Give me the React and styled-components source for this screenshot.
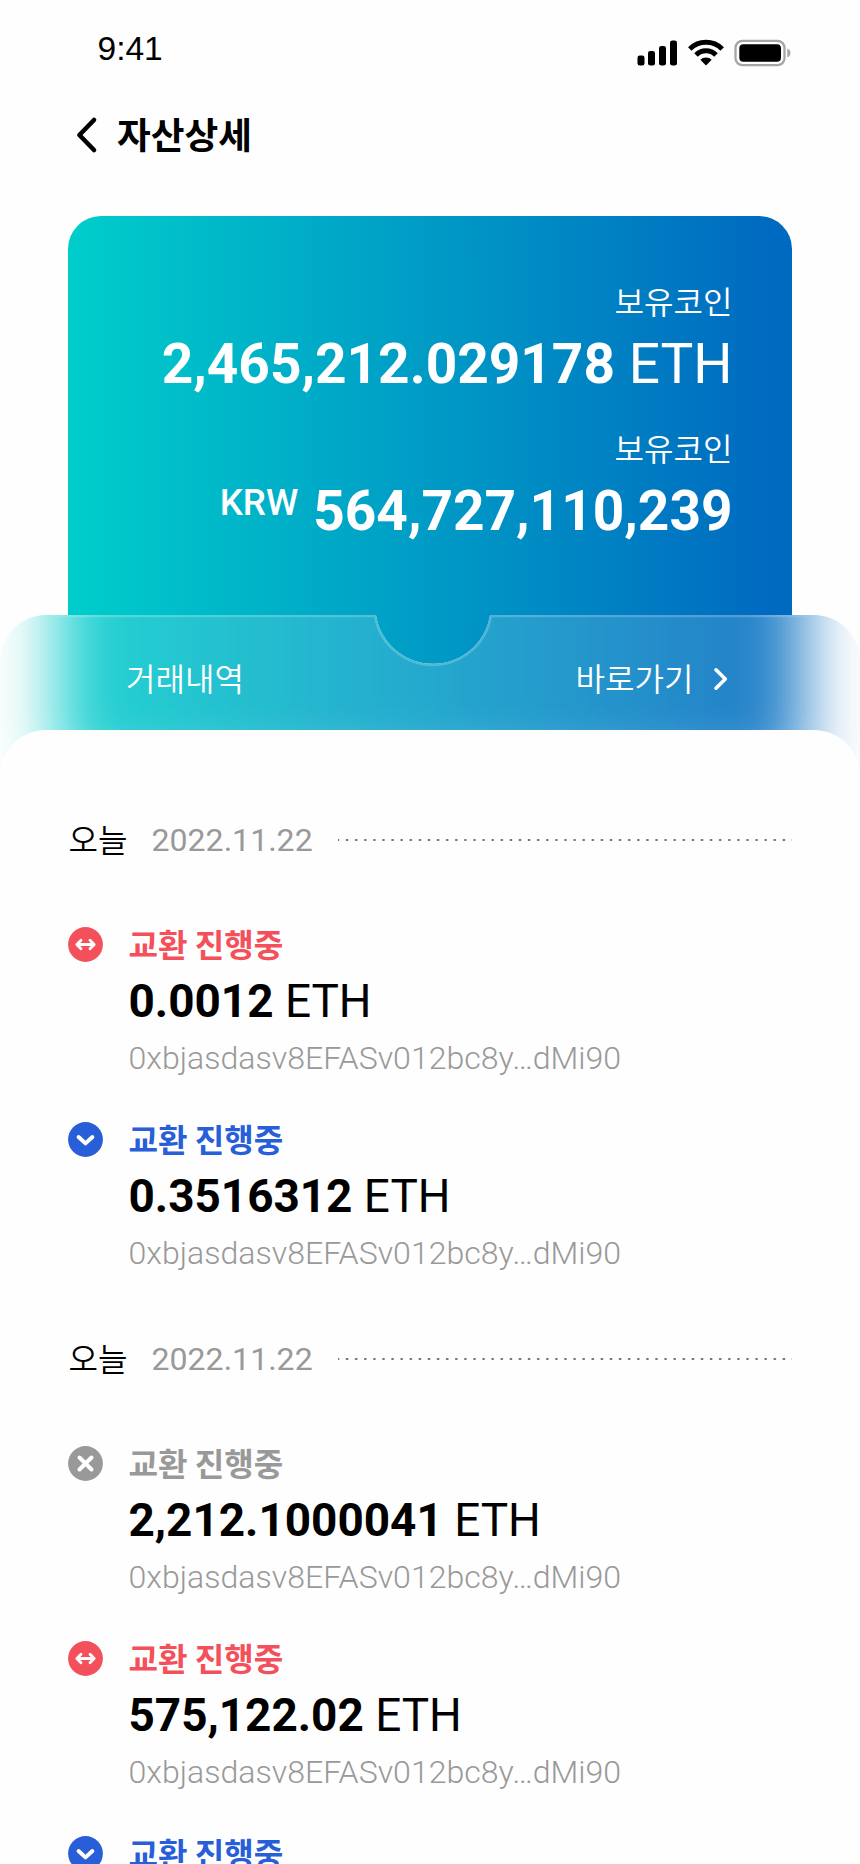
import React from "react";
import styled, { createGlobalStyle } from "styled-components";

const KR = '"Noto Sans CJK KR", sans-serif';
const LATIN = 'Roboto, "Noto Sans CJK KR", sans-serif';

const GlobalStyle = createGlobalStyle`
  * { box-sizing: border-box; }
  html, body { margin: 0; padding: 0; background: #fefefe; }
  body { width: 860px; height: 1864px; overflow: hidden; }
  #root { height: 100%; }
`;

const Screen = styled.main`
  display: flex;
  flex-direction: column;
  width: 860px;
  height: 1864px;
  overflow: hidden;
  background: #fefefe;
  color: #000;
`;

const StatusBar = styled.div`
  display: flex;
  flex: none;
  justify-content: space-between;
  height: 104px;
  padding: 29px 69px 0 97.5px;
`;

const Clock = styled.time`
  font: 400 33.5px/40px "Liberation Sans", Arial, sans-serif;
`;

const StatusIcons = styled.svg`
  width: 156px;
  height: 32px;
  margin-top: 7px;
`;

const NavBar = styled.header`
  display: flex;
  flex: none;
  align-items: center;
  height: 58px;
  padding-left: 74px;
  margin-bottom: 53.5px;
`;

const BackButton = styled.button`
  display: flex;
  width: 43px;
  padding: 3px 0 0;
  border: 0;
  background: none;
  color: inherit;
`;

const Title = styled.h1`
  margin: -1px 0 0;
  font: 700 36.7px/58px ${KR};
`;

const cardGradient = "linear-gradient(90deg, #00cdcb 1%, #0069c0 98%)";

const BalanceCard = styled.section`
  display: flex;
  flex-direction: column;
  align-items: flex-end;
  flex: none;
  height: 500px;
  margin: 0 68px;
  padding: 61px 59.5px 0 0;
  border-radius: 33px 33px 0 0;
  background: ${cardGradient};
  color: #fff;
`;

const Balance = styled.div`
  display: flex;
  flex-direction: column;
  align-items: flex-end;
  height: 147px;
`;

const BalanceLabel = styled.span`
  margin-bottom: 9.5px;
  font: 350 32.1px/46px ${KR};
`;

const BalanceValue = styled.strong`
  font: 700 55px/64px ${LATIN};
  white-space: pre;
`;

const Unit = styled.span`
  font-weight: 400;
`;

const Currency = styled.span`
  margin-right: 15px;
  font-size: 36.7px;
  font-weight: 500;
  line-height: 1;
  vertical-align: 15px;
`;

const ActionStrip = styled.nav`
  position: relative;
  display: flex;
  justify-content: space-between;
  flex: none;
  height: 161px;
  margin-top: -100.5px;
  padding: 39px 131.5px 0 126px;
  color: #fff;
`;

const Glass = styled.div`
  position: absolute;
  inset: 0;
  overflow: hidden;
  background: #fefefe;
  clip-path: path("M0 161V46A46 46 0 0 1 46 0H376A57.7 57.7 0 0 0 490 0H814A46 46 0 0 1 860 46V161Z");

  &::before {
    content: "";
    position: absolute;
    inset: -150px 57px -2px;
    background: ${cardGradient};
    filter: blur(32px);
  }

  &::after {
    content: "";
    position: absolute;
    inset: 0;
    background: rgba(255, 255, 255, 0.14);
  }
`;

const GlassEdge = styled.svg`
  position: absolute;
  inset: 0;
  width: 860px;
  height: 161px;
`;

const StripLink = styled.a`
  position: relative;
  display: flex;
  height: 46px;
  font: 350 32.1px/46px ${KR};
`;

const Chevron = styled.svg`
  width: 17px;
  height: 28px;
  margin: 11px 0 0 18px;
`;

const HistorySheet = styled.section`
  position: relative;
  flex: 1 0 auto;
  margin-top: -46px;
  padding: 85px 68px 0;
  border-radius: 46px 46px 0 0;
  background: #fefefe;
`;

const DayHeader = styled.h2`
  display: flex;
  align-items: center;
  height: 46px;
  margin: 0 0 60px;
  padding-left: 0.5px;
  font: 350 32.1px/46px ${KR};
`;

const DateText = styled.time`
  margin: 4px 25px 0 24px;
  font-family: ${LATIN};
  font-weight: 400;
  color: #999;
`;

const DottedRule = styled.span`
  flex: 1;
  height: 2px;
  margin-top: 3px;
  background: repeating-linear-gradient(
    90deg,
    #777 0 0.6px,
    transparent 1.8px 7.3px,
    #777 8.5px 9.1px
  );
`;

const Transactions = styled.ul`
  display: flex;
  flex-direction: column;
  gap: 35px;
  margin: 0 0 58px;
  padding: 0;
  list-style: none;
`;

const Transaction = styled.li`
  display: grid;
  grid-template-columns: 60.5px 1fr;
  height: 160px;
`;

const StatusIcon = styled.svg`
  width: 35px;
  height: 35px;
  margin-top: 6px;
  fill: none;
  stroke: #fff;
  stroke-linecap: round;
  stroke-linejoin: round;
`;

const Details = styled.div`
  display: flex;
  flex-direction: column;
`;

const Status = styled.span`
  margin-bottom: 2px;
  color: ${(p) => p.$color};
  font: 700 32.1px/44px ${KR};
`;

const Amount = styled.strong`
  margin: 5px 0;
  font: 700 45.9px/58px ${LATIN};
`;

const Address = styled.span`
  font: 300 32.1px/46px ${LATIN};
  color: #999;
`;

const STATUS = {
  exchange: {
    color: "#f4505b",
    glyph: <path strokeWidth="2.8" d="M9.5 17.5H25.5M13 13.2L8.8 17.5L13 21.8M22 13.2L26.2 17.5L22 21.8" />,
  },
  receive: {
    color: "#285fd9",
    glyph: <path strokeWidth="4" d="M10.6 15L17.5 21.4L24.4 15" />,
  },
  cancel: {
    color: "#999",
    glyph: <path strokeWidth="4" d="M11.5 11.5L23.5 23.5M23.5 11.5L11.5 23.5" />,
  },
};

const days = [
  {
    date: "2022.11.22",
    items: [
      { status: "exchange", amount: "0.0012" },
      { status: "receive", amount: "0.3516312" },
    ],
  },
  {
    date: "2022.11.22",
    items: [
      { status: "cancel", amount: "2,212.1000041" },
      { status: "exchange", amount: "575,122.02" },
      { status: "receive", amount: "0.3516312" },
    ],
  },
];

function TransactionItem({ status, amount }) {
  const { color, glyph } = STATUS[status];
  return (
    <Transaction>
      <StatusIcon viewBox="0 0 35 35">
        <circle cx="17.5" cy="17.5" r="17.4" fill={color} stroke="none" />
        {glyph}
      </StatusIcon>
      <Details>
        <Status $color={color}>교환 진행중</Status>
        <Amount>
          {amount} <Unit>ETH</Unit>
        </Amount>
        <Address>0xbjasdasv8EFASv012bc8y…dMi90</Address>
      </Details>
    </Transaction>
  );
}

export default function App() {
  return (
    <Screen>
      <GlobalStyle />
      <StatusBar>
        <Clock>9:41</Clock>
        <StatusIcons viewBox="0 0 156 32">
          <rect x="2.5" y="19.5" width="7" height="10" rx="2.3" />
          <rect x="13" y="15" width="7" height="14.5" rx="2.3" />
          <rect x="24" y="10" width="7" height="19.5" rx="2.3" />
          <rect x="35" y="4.5" width="7" height="25" rx="2.3" />
          <g fill="none" stroke="#000" strokeWidth="5">
            <path d="M54.8 13A23 23 0 0 1 87.2 13" />
            <path d="M61 19A14 14 0 0 1 81 19" />
          </g>
          <path d="M71 29.5L65.3 23.8A8 8 0 0 1 76.7 23.8Z" />
          <rect x="100.5" y="4.8" width="49" height="24.4" rx="7" fill="none" stroke="#a6a6a6" strokeWidth="2.3" />
          <rect x="104.3" y="8.3" width="41.7" height="17.4" rx="4" />
          <path d="M152.3 12.5C156.5 14 156.5 20 152.3 21.5Z" fill="#a6a6a6" />
        </StatusIcons>
      </StatusBar>

      <NavBar>
        <BackButton aria-label="뒤로">
          <svg width="24" height="38" viewBox="0 0 24 38" fill="none" stroke="#000" strokeWidth="4.6" strokeLinecap="round" strokeLinejoin="round">
            <path d="M20 4L5.4 19L20 34" />
          </svg>
        </BackButton>
        <Title>자산상세</Title>
      </NavBar>

      <BalanceCard>
        <Balance>
          <BalanceLabel>보유코인</BalanceLabel>
          <BalanceValue>
            2,465,212.029178 <Unit>ETH</Unit>
          </BalanceValue>
        </Balance>
        <Balance>
          <BalanceLabel>보유코인</BalanceLabel>
          <BalanceValue>
            <Currency>KRW</Currency>564,727,110,239
          </BalanceValue>
        </Balance>
      </BalanceCard>

      <ActionStrip>
        <Glass />
        <GlassEdge viewBox="0 0 860 161" fill="none">
          <defs>
            <linearGradient id="edge" x1="0" x2="860" y1="0" y2="0" gradientUnits="userSpaceOnUse">
              <stop offset="0.05" stopColor="#fff" stopOpacity="0" />
              <stop offset="0.1" stopColor="#fff" stopOpacity="0.2" />
              <stop offset="0.9" stopColor="#fff" stopOpacity="0.2" />
              <stop offset="0.95" stopColor="#fff" stopOpacity="0" />
            </linearGradient>
          </defs>
          <path d="M46 1.2H375A58.85 58.85 0 0 0 491 1.2H814" stroke="url(#edge)" strokeWidth="2.3" />
        </GlassEdge>
        <StripLink>거래내역</StripLink>
        <StripLink>
          바로가기
          <Chevron viewBox="0 0 17 28" fill="none" stroke="#fff" strokeWidth="3.6" strokeLinecap="round" strokeLinejoin="round">
            <path d="M4 4.8L13.3 14L4 23.2" />
          </Chevron>
        </StripLink>
      </ActionStrip>

      <HistorySheet>
        {days.map((day, i) => (
          <React.Fragment key={i}>
            <DayHeader>
              오늘
              <DateText>{day.date}</DateText>
              <DottedRule />
            </DayHeader>
            <Transactions>
              {day.items.map((item, j) => (
                <TransactionItem key={j} {...item} />
              ))}
            </Transactions>
          </React.Fragment>
        ))}
      </HistorySheet>
    </Screen>
  );
}
